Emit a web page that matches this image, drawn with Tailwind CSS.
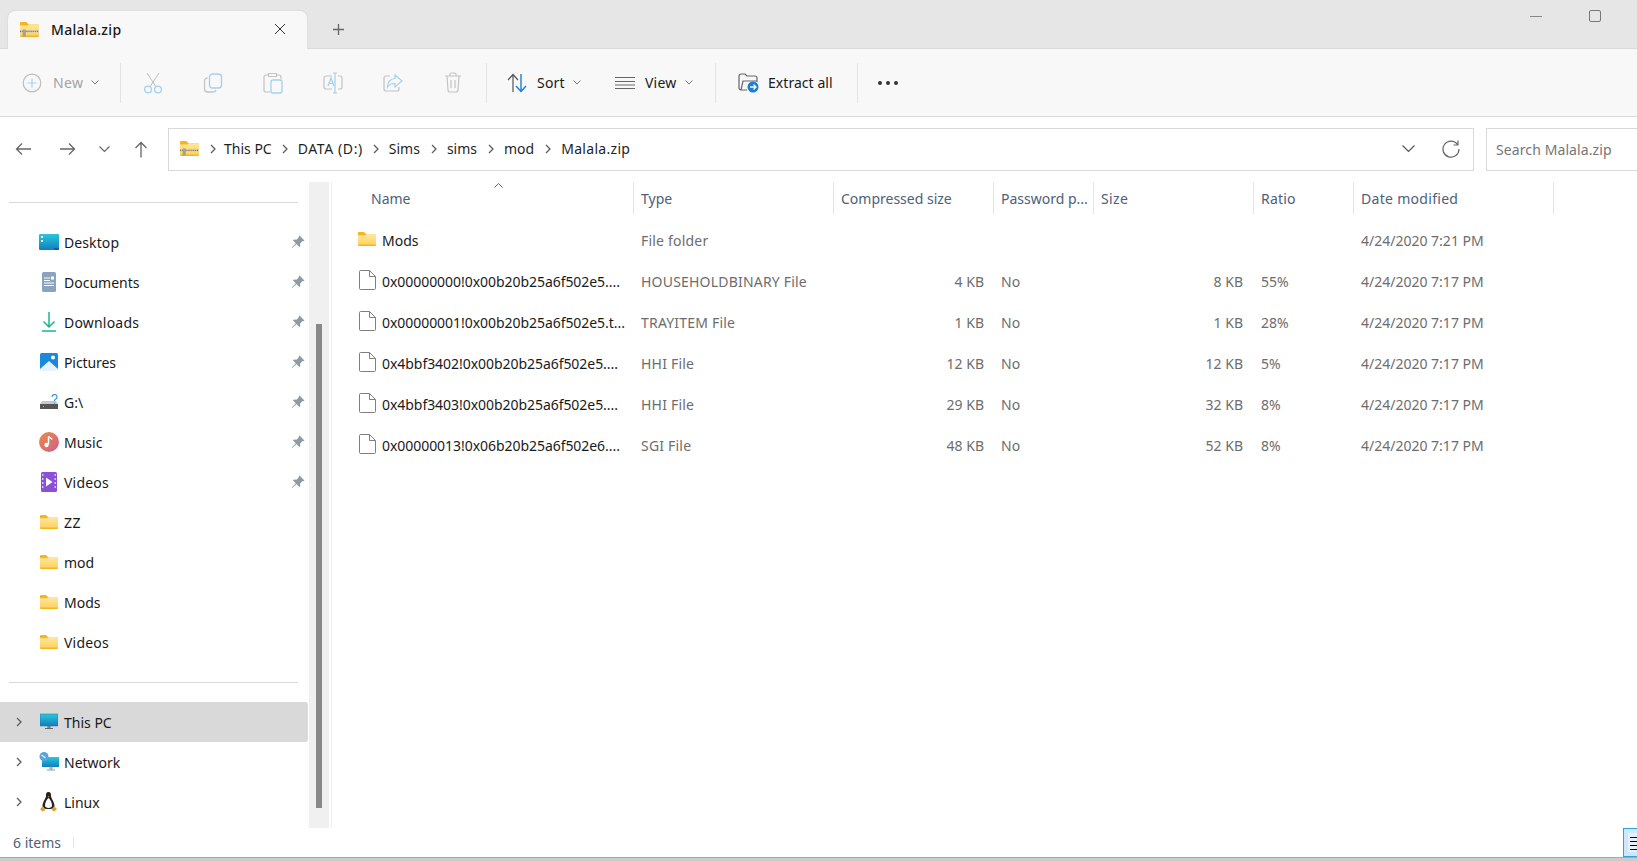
<!DOCTYPE html>
<html lang="en">
<head>
  <meta charset="UTF-8" />
  <script src="https://cdn.jsdelivr.net/npm/@tailwindcss/browser@4"></script>
  <title>Malala.zip</title>
</head>
<body class="bg-white overflow-hidden font-['Noto_Sans','Open_Sans',sans-serif] text-[14px] text-[#1a1a1a]">
  <svg class="absolute w-0 h-0" width="0" height="0">
    <defs>
      <linearGradient id="folderBody" x1="0" y1="0" x2="0" y2="1"><stop offset="0" stop-color="#ffe79f"/><stop offset="1" stop-color="#ffd262"/></linearGradient>
      <linearGradient id="screen" x1="0" y1="0" x2="0" y2="1"><stop offset="0" stop-color="#2cc6dd"/><stop offset="1" stop-color="#0f7fbe"/></linearGradient>
      <linearGradient id="music" x1="0" y1="0" x2="1" y2="1"><stop offset="0" stop-color="#ef8b3f"/><stop offset="1" stop-color="#c9608f"/></linearGradient>
      <symbol id="folder" viewBox="0 0 18 14">
        <path d="M0 1a1 1 0 0 1 1-1h5l2 2h9a1 1 0 0 1 1 1v10a1 1 0 0 1-1 1H1a1 1 0 0 1-1-1z" fill="#f6b51e"/>
        <path d="M0 3.200h7.200L9 2h8a1 1 0 0 1 1 1v9.600H0z" fill="url(#folderBody)"/>
      </symbol>
      <symbol id="zip" viewBox="0 0 18 14">
        <path d="M0 1a1 1 0 0 1 1-1h5l2 2h9a1 1 0 0 1 1 1v10a1 1 0 0 1-1 1H1a1 1 0 0 1-1-1z" fill="#f6b51e"/>
        <path d="M0 3.200h7.200L9 2h8a1 1 0 0 1 1 1v9.600H0z" fill="url(#folderBody)"/>
        <path d="M0 7.500h18v2.500H0z" fill="#d9d3ae"/>
        <path d="M0 8.750h18" stroke="#6f6f62" stroke-width="1.200" stroke-dasharray="1 1" fill="none"/>
        <path d="M2.500 7h3v7h-3z" fill="#a9a28a"/>
      </symbol>
      <symbol id="file" viewBox="0 0 17 20">
        <path d="M.5 1.500a1 1 0 0 1 1-1h9l6 6v12a1 1 0 0 1-1 1h-14a1 1 0 0 1-1-1z" fill="#fff" stroke="#7f7f7f"/>
        <path d="M10.500.5v6h6" fill="none" stroke="#7f7f7f"/>
      </symbol>
      <symbol id="pin" viewBox="0 0 14 14">
        <path d="M8.600.6l4.800 4.800-1 .9-.8-.3-2.500 2.500.2 2.400-1 1-2.800-2.800L1.300 13 .9 12.600l3.900-4.300L2 5.500l1-1 2.400.2 2.500-2.500-.3-.8z" fill="#8e99a4"/>
      </symbol>
      <symbol id="chev" viewBox="0 0 8 10">
        <path d="M2 1l4 4-4 4" fill="none" stroke="#5e5e5e" stroke-width="1.300"/>
      </symbol>
      <symbol id="down" viewBox="0 0 8 5">
        <path d="M.5.5L4 4 7.500.5" fill="none" stroke="#7a7a7a"/>
      </symbol>
    </defs>
  </svg>

  <div class="h-[861px] flex flex-col">
    <!-- tabs -->
    <div class="h-[49px] shrink-0 bg-[#e6e6e6] border-b border-[#d9d9d9] flex">
      <div class="ml-[7px] mt-[10px] w-[301px] h-[39px] bg-[#f8f8f8] rounded-t-[8px] border border-b-0 border-[#dedede] flex items-center pl-[12px] pb-[2px]">
        <svg width="19" height="15"><use href="#zip"/></svg>
        <span class="ml-[12px] font-medium tracking-[0.3px]">Malala.zip</span>
        <svg class="ml-auto mr-[21px]" width="12" height="12" viewBox="0 0 12 12"><path d="M1 1l10 10M11 1L1 11" stroke="#333" fill="none"/></svg>
      </div>
      <div class="ml-[24px] mt-[23px]">
        <svg class="block" width="13" height="13" viewBox="0 0 13 13"><path d="M6.500 1v11M1 6.500h11" stroke="#666" stroke-width="1.300" fill="none"/></svg>
      </div>
      <div class="ml-auto flex items-start pt-[10px]">
        <div class="w-[12px] h-[1px] bg-[#888] mt-[6px]"></div>
        <div class="ml-[47px] mr-[36px] w-[12px] h-[12px] border border-[#777] rounded-[2px]"></div>
      </div>
    </div>

    <!-- toolbar -->
    <div class="h-[68px] shrink-0 bg-[#f8f8f8] border-b border-[#d9d9d9] flex items-center">
      <div class="flex items-center pl-[22px] w-[120px] text-[#a3a3a3]">
        <svg width="20" height="20" viewBox="0 0 20 20"><circle cx="10" cy="10" r="8.800" fill="none" stroke="#bdbdbd" stroke-width="1.200"/><path d="M10 5.500v9M5.500 10h9" stroke="#a9d3f2" stroke-width="1.200" fill="none"/></svg>
        <span class="ml-[11px] tracking-[0.4px]">New</span>
        <svg class="ml-[8px]" width="8" height="5"><use href="#down"/></svg>
      </div>
      <div class="w-px h-[40px] bg-[#e4e4e4]"></div>
      <div class="flex items-center pl-[2px]">
        <div class="w-[60px] flex justify-center">
          <svg width="20" height="22" viewBox="0 0 20 22"><path d="M4 1l8.500 13M16 1L7.500 14" stroke="#bdbdbd" fill="none"/><circle cx="5" cy="17.500" r="3.400" fill="none" stroke="#a4d0f0" stroke-width="1.300"/><circle cx="15" cy="17.500" r="3.400" fill="none" stroke="#a4d0f0" stroke-width="1.300"/></svg>
        </div>
        <div class="w-[60px] flex justify-center">
          <svg width="20" height="20" viewBox="0 0 20 20"><rect x="6.500" y="1" width="12" height="14" rx="3" fill="none" stroke="#a4d0f0" stroke-width="1.300"/><path d="M4.500 5A3 3 0 0 0 1.500 8v8a3 3 0 0 0 3 3H10a3 3 0 0 0 3-2" fill="none" stroke="#c4c4c4" stroke-width="1.300"/></svg>
        </div>
        <div class="w-[60px] flex justify-center">
          <svg width="20" height="22" viewBox="0 0 20 22"><path d="M5 3H3a2 2 0 0 0-2 2v13a2 2 0 0 0 2 2h4M14 3h2a2 2 0 0 1 2 2v2M5.500 1.500h8v3h-8z" fill="none" stroke="#c4c4c4" stroke-width="1.200"/><rect x="8" y="8" width="11" height="13" rx="2" fill="none" stroke="#a4d0f0" stroke-width="1.300"/></svg>
        </div>
        <div class="w-[60px] flex justify-center">
          <svg width="20" height="22" viewBox="0 0 20 22"><path d="M9 4H3a2 2 0 0 0-2 2v9a2 2 0 0 0 2 2h6M15 4h2a2 2 0 0 1 2 2v9a2 2 0 0 1-2 2h-2" fill="none" stroke="#c4c4c4" stroke-width="1.200"/><path d="M12 1v20M10 1h4M10 21h4M5 14l3-8 3 8M6 11.500h4" fill="none" stroke="#a4d0f0" stroke-width="1.200"/></svg>
        </div>
        <div class="w-[60px] flex justify-center">
          <svg width="20" height="20" viewBox="0 0 20 20"><path d="M7 3H3a2 2 0 0 0-2 2v11a2 2 0 0 0 2 2h11a2 2 0 0 0 2-2v-2" fill="none" stroke="#c4c4c4" stroke-width="1.200"/><path d="M12 2l7 6-7 6v-3.500c-3.500 0-6 1-7.500 3.500 0-5 3-8.500 7.500-8.500z" fill="none" stroke="#a4d0f0" stroke-width="1.200"/></svg>
        </div>
        <div class="w-[60px] flex justify-center">
          <svg width="18" height="21" viewBox="0 0 18 21"><path d="M1 4h16M6 4V2.500A1.500 1.500 0 0 1 7.500 1h3A1.500 1.500 0 0 1 12 2.500V4M3 4l1 14a2 2 0 0 0 2 2h6a2 2 0 0 0 2-2l1-14M7 8v8M11 8v8" fill="none" stroke="#c4c4c4" stroke-width="1.200"/></svg>
        </div>
      </div>
      <div class="ml-[3px] w-px h-[40px] bg-[#e4e4e4]"></div>
      <div class="flex items-center pl-[20px] w-[103px]">
        <svg width="21" height="20" viewBox="0 0 21 20"><path d="M6 19V2M1 7l5-5.500L11 7" fill="none" stroke="#555" stroke-width="1.200"/><path d="M14 1v17M9 13l5 5.500 5-5.500" fill="none" stroke="#1a7fd4" stroke-width="1.400"/></svg>
        <span class="ml-[9px] tracking-[0.2px]">Sort</span>
        <svg class="ml-[8px]" width="8" height="5"><use href="#down"/></svg>
      </div>
      <div class="flex items-center pl-[25px] w-[125px]">
        <svg width="20" height="14" viewBox="0 0 20 14"><path d="M0 1.500h20M0 5.500h20M0 9h20M0 12.500h20" stroke="#666" stroke-width="1.200" fill="none"/></svg>
        <span class="ml-[10px] tracking-[0.2px]">View</span>
        <svg class="ml-[9px]" width="8" height="5"><use href="#down"/></svg>
      </div>
      <div class="w-px h-[40px] bg-[#e4e4e4]"></div>
      <div class="flex items-center pl-[22px] w-[141px]">
        <svg width="21" height="20" viewBox="0 0 21 20"><path d="M9 17H3a2 2 0 0 1-2-2V3a2 2 0 0 1 2-2h4l2 2h8a2 2 0 0 1 2 2v4M3 17l2-9h14" fill="none" stroke="#666" stroke-width="1.200"/><circle cx="15" cy="14" r="5.500" fill="#1a7fd4"/><path d="M12 14h6M15.500 11.500L18 14l-2.500 2.500" stroke="#fff" stroke-width="1.300" fill="none"/></svg>
        <span class="ml-[9px] tracking-[0.05px]">Extract all</span>
      </div>
      <div class="w-px h-[40px] bg-[#e4e4e4]"></div>
      <div class="ml-[20px] flex gap-[4px]">
        <div class="w-[4px] h-[4px] rounded-full bg-[#333]"></div>
        <div class="w-[4px] h-[4px] rounded-full bg-[#333]"></div>
        <div class="w-[4px] h-[4px] rounded-full bg-[#333]"></div>
      </div>
    </div>

    <!-- address row -->
    <div class="h-[65px] shrink-0 flex items-start pt-[11px]">
      <div class="w-[168px] h-[42px] flex items-center pl-[15px]">
        <svg width="17" height="14" viewBox="0 0 17 14"><path d="M16 7H1.500M7 1.500L1.500 7 7 12.500" fill="none" stroke="#666" stroke-width="1.300"/></svg>
        <svg class="ml-[27px]" width="17" height="14" viewBox="0 0 17 14"><path d="M1 7h14.500M10 1.500L15.500 7 10 12.500" fill="none" stroke="#666" stroke-width="1.300"/></svg>
        <svg class="ml-[23px]" width="11" height="7" viewBox="0 0 11 7"><path d="M.5.5l5 5 5-5" fill="none" stroke="#666" stroke-width="1.200"/></svg>
        <svg class="ml-[24px]" width="14" height="17" viewBox="0 0 14 17"><path d="M7 16.500V1.500M1.500 7L7 1.500 12.500 7" fill="none" stroke="#666" stroke-width="1.300"/></svg>
      </div>
      <div class="w-[1306px] h-[43px] border border-[#d9d9d9] flex items-center pl-[11px] pb-[2px] text-[#1f1f1f]">
        <svg width="19" height="15"><use href="#zip"/></svg>
        <svg class="ml-[10px]" width="8" height="10"><use href="#chev"/></svg>
        <span class="ml-[7px]">This PC</span>
        <svg class="ml-[9px]" width="8" height="10"><use href="#chev"/></svg>
        <span class="ml-[9px] tracking-[0.6px]">DATA (D:)</span>
        <svg class="ml-[9px]" width="8" height="10"><use href="#chev"/></svg>
        <span class="ml-[9px]">Sims</span>
        <svg class="ml-[10px]" width="8" height="10"><use href="#chev"/></svg>
        <span class="ml-[9px]">sims</span>
        <svg class="ml-[10px]" width="8" height="10"><use href="#chev"/></svg>
        <span class="ml-[9px]">mod</span>
        <svg class="ml-[10px]" width="8" height="10"><use href="#chev"/></svg>
        <span class="ml-[9px] tracking-[0.3px]">Malala.zip</span>
        <svg class="ml-auto" width="13" height="8" viewBox="0 0 13 8"><path d="M.5.5l6 6 6-6" fill="none" stroke="#555" stroke-width="1.200"/></svg>
        <svg class="ml-[27px] mr-[13px]" width="18" height="18" viewBox="0 0 18 18"><path d="M15.500 4.500A8 8 0 1 0 17 9M16 .5v4.500h-4.500" fill="none" stroke="#666" stroke-width="1.200"/></svg>
      </div>
      <div class="ml-[12px] flex-1 h-[43px] border border-[#d9d9d9] border-r-0 flex items-center pl-[9px] text-[#767676] tracking-[0.1px]">Search Malala.zip</div>
    </div>

    <!-- body -->
    <div class="h-[646px] shrink-0 flex">
      <!-- nav pane -->
      <div class="w-[309px] shrink-0">
        <div class="ml-[9px] mr-[11px] mt-[20px] h-px bg-[#d9d9d9]"></div>
        <div class="mt-[19px]">
          <div class="h-[40px] flex items-center pl-[39px]">
            <svg width="20" height="16" viewBox="0 0 20 16"><rect width="20" height="16" rx="1" fill="url(#screen)"/><path d="M2 2h2v2H2zM2 6h2v2H2z" fill="#fff"/><path d="M15 14h5v2h-5z" fill="#1b5f8d"/></svg>
            <span class="ml-[5px] tracking-[0.1px]">Desktop</span>
            <svg class="ml-auto mr-[4px]" width="14" height="14"><use href="#pin"/></svg>
          </div>
          <div class="h-[40px] flex items-center pl-[42px]">
            <svg width="14" height="20" viewBox="0 0 14 20"><rect width="14" height="20" rx="1.500" fill="#8ca3c0"/><path d="M2 6h6M2 8.500h6M2 11h10M2 13.500h10" stroke="#fff" fill="none"/><path d="M9 4.500h3v3H9z" fill="#fff"/></svg>
            <span class="ml-[8px]">Documents</span>
            <svg class="ml-auto mr-[4px]" width="14" height="14"><use href="#pin"/></svg>
          </div>
          <div class="h-[40px] flex items-center pl-[42px]">
            <svg width="14" height="20" viewBox="0 0 14 20"><path d="M7 0v15M1.500 9.500L7 15l5.500-5.500" fill="none" stroke="#1fb392" stroke-width="1.500"/><path d="M0 19h14" stroke="#1fb392" stroke-width="1.500" fill="none"/></svg>
            <span class="ml-[8px] tracking-[0.2px]">Downloads</span>
            <svg class="ml-auto mr-[4px]" width="14" height="14"><use href="#pin"/></svg>
          </div>
          <div class="h-[40px] flex items-center pl-[40px]">
            <svg width="18" height="18" viewBox="0 0 18 18"><rect width="18" height="18" rx="1.500" fill="#1a88dd"/><path d="M0 16l9-8 9 8v2H0z" fill="#e8f3fc"/><circle cx="13" cy="4.500" r="2" fill="#fff"/></svg>
            <span class="ml-[6px] tracking-[-0.1px]">Pictures</span>
            <svg class="ml-auto mr-[4px]" width="14" height="14"><use href="#pin"/></svg>
          </div>
          <div class="h-[40px] flex items-center pl-[40px]">
            <svg width="19" height="16" viewBox="0 0 19 16"><path d="M2 7h14l2 3H0z" fill="#c9c9c9"/><path d="M0 10h18v5H0z" fill="#555"/><path d="M3 12h1v1H3z" fill="#5ce35c"/><path d="M12 3a2.500 2.500 0 1 1 3.500 2.300c-.6.300-1 .7-1 1.700M14.500 8.500v1" stroke="#2b93dd" stroke-width="1.200" fill="none"/></svg>
            <span class="ml-[5px]">G:\</span>
            <svg class="ml-auto mr-[4px]" width="14" height="14"><use href="#pin"/></svg>
          </div>
          <div class="h-[40px] flex items-center pl-[39px]">
            <svg width="20" height="20" viewBox="0 0 20 20"><circle cx="10" cy="10" r="10" fill="url(#music)"/><path d="M9.500 4.500v8" stroke="#fff" stroke-width="1.500" fill="none"/><circle cx="7.500" cy="13" r="2.200" fill="#fff"/><path d="M9.500 4.500c1 1.500 3 1.500 3.500 3" stroke="#fff" stroke-width="1.500" fill="none"/></svg>
            <span class="ml-[5px]">Music</span>
            <svg class="ml-auto mr-[4px]" width="14" height="14"><use href="#pin"/></svg>
          </div>
          <div class="h-[40px] flex items-center pl-[41px]">
            <svg width="16" height="20" viewBox="0 0 16 20"><rect width="16" height="20" rx="1.500" fill="#8b4fd8"/><path d="M1 2h1.500v2H1zM1 6h1.500v2H1zM1 10h1.500v2H1zM1 14h1.500v2H1zM13.500 2H15v2h-1.500zM13.500 6H15v2h-1.500zM13.500 10H15v2h-1.500zM13.500 14H15v2h-1.500z" fill="#d8c0f5"/><path d="M5 5.500l6.500 4.500L5 14.500z" fill="#fff"/></svg>
            <span class="ml-[7px] tracking-[0.2px]">Videos</span>
            <svg class="ml-auto mr-[4px]" width="14" height="14"><use href="#pin"/></svg>
          </div>
          <div class="h-[40px] flex items-center pl-[40px]">
            <svg width="18" height="14"><use href="#folder"/></svg>
            <span class="ml-[6px] tracking-[0.6px]">ZZ</span>
          </div>
          <div class="h-[40px] flex items-center pl-[40px]">
            <svg width="18" height="14"><use href="#folder"/></svg>
            <span class="ml-[6px]">mod</span>
          </div>
          <div class="h-[40px] flex items-center pl-[40px]">
            <svg width="18" height="14"><use href="#folder"/></svg>
            <span class="ml-[6px]">Mods</span>
          </div>
          <div class="h-[40px] flex items-center pl-[40px]">
            <svg width="18" height="14"><use href="#folder"/></svg>
            <span class="ml-[6px] tracking-[0.2px]">Videos</span>
          </div>
        </div>
        <div class="ml-[9px] mr-[11px] mt-[20px] h-px bg-[#d9d9d9]"></div>
        <div class="mt-[19px]">
          <div class="h-[40px] mr-[1px] bg-[#d9d9d9] rounded-r-[3px] flex items-center pl-[15px]">
            <svg width="8" height="10"><use href="#chev"/></svg>
            <svg class="ml-[17px]" width="18" height="18" viewBox="0 0 18 18"><rect y="1" width="18" height="12" fill="url(#screen)" stroke="#2b6f94" stroke-width=".5"/><path d="M8 13h2v2H8zM5 15.500h8" stroke="#5a6b75" fill="none"/></svg>
            <span class="ml-[6px]">This PC</span>
          </div>
          <div class="h-[40px] flex items-center pl-[15px]">
            <svg width="8" height="10"><use href="#chev"/></svg>
            <svg class="ml-[16px]" width="20" height="20" viewBox="0 0 20 20"><rect x="3" y="5" width="17" height="10" fill="url(#screen)"/><path d="M11 15h2v2h-2zM8 18h8" stroke="#8a99a3" fill="none"/><circle cx="5" cy="4.500" r="4.500" fill="#5aa5d8"/><path d="M2.500 3l4 3" stroke="#e2f1fb" stroke-width="1.200" fill="none"/></svg>
            <span class="ml-[5px]">Network</span>
          </div>
          <div class="h-[40px] flex items-center pl-[15px]">
            <svg width="8" height="10"><use href="#chev"/></svg>
            <svg class="ml-[17px]" width="17" height="20" viewBox="0 0 17 20"><path d="M8.500 0C6.500 0 5.800 1.500 6 4c.1 2-3.500 6-3.500 10 0 1.500.5 3 6 3s6-1.500 6-3c0-4-3.600-8-3.500-10 .2-2.500-.5-4-2.500-4z" fill="#222"/><path d="M8.500 6c-1.500 1-3.500 4.500-3.500 7.500 0 1.500 1.500 2.500 3.500 2.500s3.500-1 3.500-2.500C12 10.500 10 7 8.500 6z" fill="#fff"/><path d="M7.500 4.300h2L8.500 5.500z" fill="#e0a030"/><path d="M0 17l3-3 2.500 4-3 1.500zM17 17l-3-3-2.500 4 3 1.500z" fill="#dca329"/></svg>
            <span class="ml-[7px]">Linux</span>
          </div>
        </div>
      </div>

      <!-- scrollbar -->
      <div class="w-[20px] shrink-0 bg-[#f0f0f0] pl-[7px] pt-[142px]">
        <div class="w-[6px] h-[484px] bg-[#888888]"></div>
      </div>
      <div class="ml-[2px] w-px bg-[#f0f0f0]"></div>

      <!-- file list -->
      <div class="flex-1 relative">
        <div class="grid grid-cols-[301px_200px_160px_100px_160px_100px_201px] h-[32px] items-stretch text-[#4d6079]">
          <div class="pl-[39px] flex items-center relative">Name
            <svg class="absolute left-[162px] top-[1px]" width="9" height="5" viewBox="0 0 9 5"><path d="M.5 4.500l4-4 4 4" fill="none" stroke="#666"/></svg>
          </div>
          <div class="border-l border-[#e5e5e5] pl-[7px] flex items-center">Type</div>
          <div class="border-l border-[#e5e5e5] pl-[7px] flex items-center">Compressed size</div>
          <div class="border-l border-[#e5e5e5] pl-[7px] flex items-center">Password p...</div>
          <div class="border-l border-[#e5e5e5] pl-[7px] flex items-center tracking-[0.4px]">Size</div>
          <div class="border-l border-[#e5e5e5] pl-[7px] flex items-center tracking-[0.2px]">Ratio</div>
          <div class="border-x border-[#e5e5e5] pl-[7px] flex items-center tracking-[0.3px]">Date modified</div>
        </div>
        <div class="mt-[6px] grid grid-cols-[301px_200px_160px_100px_160px_100px_201px] auto-rows-[41px] items-center text-[#6d6d6d]">
          <div class="pl-[26px] flex items-center text-[#1a1a1a]"><svg class="mb-[3px]" width="18" height="14"><use href="#folder"/></svg><span class="ml-[6px]">Mods</span></div>
          <div class="pl-[8px] tracking-[0.2px]">File folder</div><div></div><div></div><div></div><div></div>
          <div class="pl-[8px]">4/24/2020 7:21 PM</div>

          <div class="pl-[27px] flex items-center text-[#1a1a1a]"><svg class="mb-[3px]" width="17" height="20"><use href="#file"/></svg><span class="ml-[6px] tracking-[-0.05px]">0x00000000!0x00b20b25a6f502e5....</span></div>
          <div class="pl-[8px] tracking-[0.2px]">HOUSEHOLDBINARY File</div>
          <div class="pr-[9px] text-right">4 KB</div>
          <div class="pl-[8px]">No</div>
          <div class="pr-[10px] text-right">8 KB</div>
          <div class="pl-[8px]">55%</div>
          <div class="pl-[8px]">4/24/2020 7:17 PM</div>

          <div class="pl-[27px] flex items-center text-[#1a1a1a]"><svg class="mb-[3px]" width="17" height="20"><use href="#file"/></svg><span class="ml-[6px] tracking-[-0.05px]">0x00000001!0x00b20b25a6f502e5.t...</span></div>
          <div class="pl-[8px] tracking-[0.2px]">TRAYITEM File</div>
          <div class="pr-[9px] text-right">1 KB</div>
          <div class="pl-[8px]">No</div>
          <div class="pr-[10px] text-right">1 KB</div>
          <div class="pl-[8px]">28%</div>
          <div class="pl-[8px]">4/24/2020 7:17 PM</div>

          <div class="pl-[27px] flex items-center text-[#1a1a1a]"><svg class="mb-[3px]" width="17" height="20"><use href="#file"/></svg><span class="ml-[6px] tracking-[-0.05px]">0x4bbf3402!0x00b20b25a6f502e5....</span></div>
          <div class="pl-[8px] tracking-[0.2px]">HHI File</div>
          <div class="pr-[9px] text-right">12 KB</div>
          <div class="pl-[8px]">No</div>
          <div class="pr-[10px] text-right">12 KB</div>
          <div class="pl-[8px]">5%</div>
          <div class="pl-[8px]">4/24/2020 7:17 PM</div>

          <div class="pl-[27px] flex items-center text-[#1a1a1a]"><svg class="mb-[3px]" width="17" height="20"><use href="#file"/></svg><span class="ml-[6px] tracking-[-0.05px]">0x4bbf3403!0x00b20b25a6f502e5....</span></div>
          <div class="pl-[8px] tracking-[0.2px]">HHI File</div>
          <div class="pr-[9px] text-right">29 KB</div>
          <div class="pl-[8px]">No</div>
          <div class="pr-[10px] text-right">32 KB</div>
          <div class="pl-[8px]">8%</div>
          <div class="pl-[8px]">4/24/2020 7:17 PM</div>

          <div class="pl-[27px] flex items-center text-[#1a1a1a]"><svg class="mb-[3px]" width="17" height="20"><use href="#file"/></svg><span class="ml-[6px] tracking-[-0.05px]">0x00000013!0x06b20b25a6f502e6....</span></div>
          <div class="pl-[8px] tracking-[0.2px]">SGI File</div>
          <div class="pr-[9px] text-right">48 KB</div>
          <div class="pl-[8px]">No</div>
          <div class="pr-[10px] text-right">52 KB</div>
          <div class="pl-[8px]">8%</div>
          <div class="pl-[8px]">4/24/2020 7:17 PM</div>
        </div>
      </div>
    </div>

    <!-- status bar -->
    <div class="h-[29px] shrink-0 bg-white flex items-center relative">
      <span class="ml-[13px] text-[#4d6079]">6 items</span>
      <div class="absolute left-[73px] top-[9px] h-[11px] w-px bg-[#e5e5e5]"></div>
      <div class="absolute right-0 top-0 h-[29px] w-[14px] border border-r-0 border-[#2fa3e0] bg-[#cce8ff] pl-[4px] pt-[4px]">
        <div class="h-[19px] bg-[#e5f0fa] pt-[4px] flex flex-col gap-[3px]">
          <div class="ml-[2px] h-px bg-black"></div>
          <div class="ml-[2px] h-px bg-black"></div>
          <div class="ml-[2px] h-px bg-black"></div>
          <div class="ml-[2px] h-px bg-black"></div>
        </div>
      </div>
    </div>
    <div class="h-[4px] shrink-0 bg-[#cccccc] border-t border-[#a8a8a8]"></div>
  </div>
</body>
</html>
